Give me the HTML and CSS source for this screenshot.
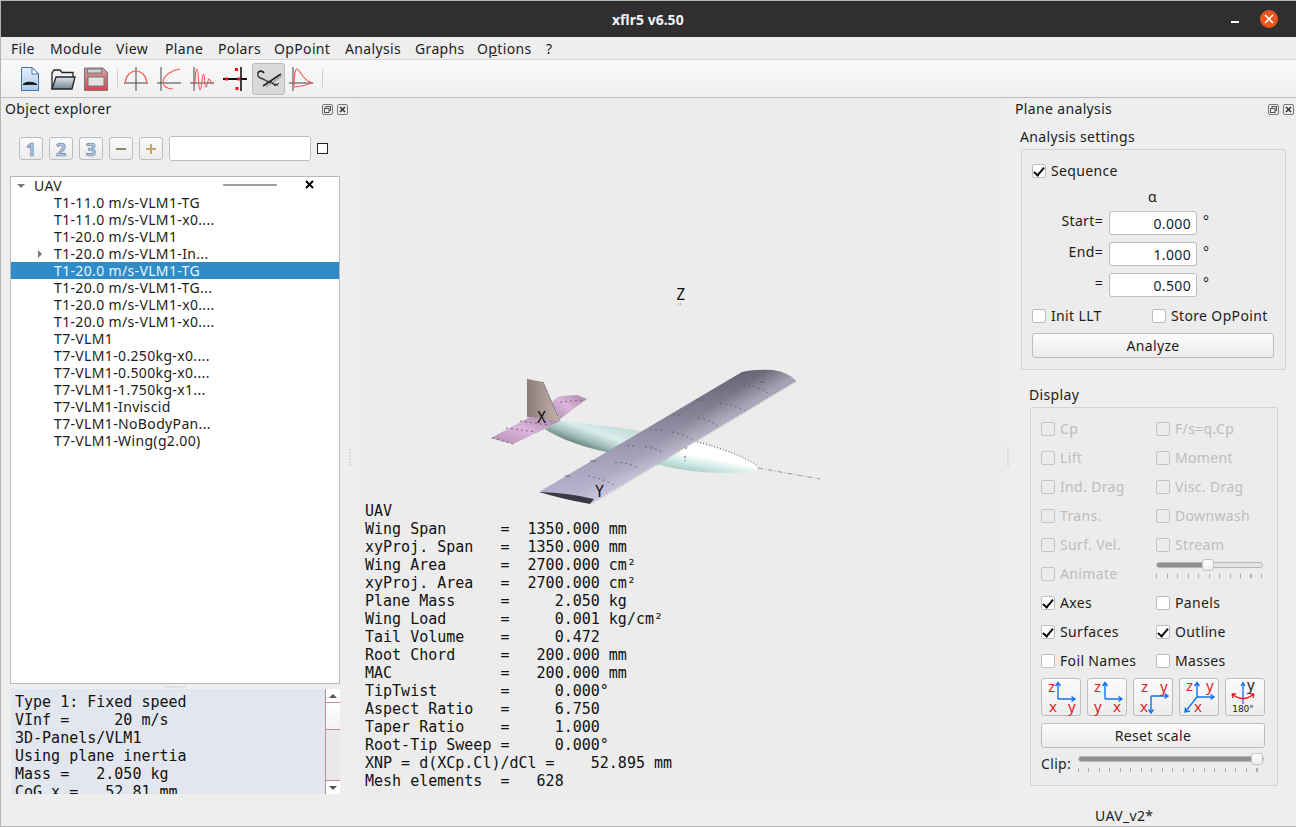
FILE: index.html
```html
<!DOCTYPE html>
<html lang="en">
<head>
    <meta charset="UTF-8">
    <title>xflr5 v6.50</title>
    <link rel="stylesheet" href="styles.css">
</head>
<body>
<div class="window">
    <div class="titlebar">
        <span class="title">xflr5 v6.50</span>
        <span class="minimize"></span>
        <span class="close">
            <svg width="10" height="10" viewBox="0 0 10 10"><path d="M1 1L9 9M9 1L1 9" stroke="#fff" stroke-width="1.6"/></svg>
        </span>
    </div>

    <div class="menubar">
        <span>File</span><span>Module</span><span>View</span><span>Plane</span><span>Polars</span><span>OpPoint</span><span>Analysis</span><span>Graphs</span><span>O<u>p</u>tions</span><span>?</span>
    </div>

    <div class="toolbar">
        <span class="grip"></span>
        <span class="tool doc">
            <svg width="24" height="26" viewBox="0 0 24 26">
                <defs><linearGradient id="docfill" x1="0" y1="0" x2="0" y2="1"><stop offset="0" stop-color="#e4eef8"/><stop offset="1" stop-color="#a9cbea"/></linearGradient></defs>
                <path d="M3.5 1.5H14L20.5 8V24.5H3.5Z" fill="url(#docfill)" stroke="#3f75ab"/>
                <path d="M14 1.5V8H20.5Z" fill="#fff" stroke="#3f75ab"/>
                <path d="M5 18.5C8 15.5 15 15.5 19 18.5C14 18 9 18.5 5 18.5Z" fill="#111" stroke="#111"/>
            </svg>
        </span>
        <span class="tool">
            <svg width="26" height="26" viewBox="0 0 26 26">
                <defs><linearGradient id="folderfill" x1="0" y1="0" x2="0" y2="1"><stop offset="0" stop-color="#dfe5ea"/><stop offset="1" stop-color="#6f8598"/></linearGradient></defs>
                <path d="M2 23V7L4 4H10L12 6.500H23V11" fill="#f3f3f3" stroke="#222" stroke-width="1.300"/>
                <path d="M2 23L6 11H25L22 23Z" fill="url(#folderfill)" stroke="#222" stroke-width="1.300"/>
            </svg>
        </span>
        <span class="tool">
            <svg width="26" height="26" viewBox="0 0 26 26">
                <defs><linearGradient id="savefill" x1="0" y1="0" x2="0" y2="1"><stop offset="0" stop-color="#c9a4a6"/><stop offset="1" stop-color="#d9434f"/></linearGradient></defs>
                <path d="M1.500 2H20L24.500 6.500V24.500H1.500Z" fill="url(#savefill)" stroke="#777"/>
                <rect x="4.500" y="3" width="14" height="4" fill="#d9cfcf" stroke="#777"/>
                <rect x="5" y="11" width="16" height="9" fill="#e6e1e1" stroke="#777"/>
            </svg>
        </span>
        <span class="tool-sep first"></span>
        <span class="tool">
            <svg width="26" height="26" viewBox="0 0 26 26">
                <path d="M1 17H25M13 1V25" stroke="#444" stroke-width="1" fill="none"/>
                <path d="M2 17C3 9 8 5 13 5C18 5 23 9 24 17" stroke="#f25a5a" stroke-width="1.100" fill="none"/>
            </svg>
        </span>
        <span class="tool">
            <svg width="26" height="26" viewBox="0 0 26 26">
                <path d="M1 17H25M5 1V25" stroke="#444" stroke-width="1" fill="none"/>
                <path d="M24 3C16 4 8 9 7 16C7 20 11 23 17 23" stroke="#f25a5a" stroke-width="1.100" fill="none"/>
            </svg>
        </span>
        <span class="tool">
            <svg width="26" height="26" viewBox="0 0 26 26">
                <path d="M1 17H25M5 1V25" stroke="#444" stroke-width="1" fill="none"/>
                <path d="M6 18C6 10 7 3 8 3C10 3 9 24 11 24C13 24 13 8 14.500 8C16 8 15 21 17 21C18.500 21 18.500 13 20 13C21.500 13 21 18 25 17" stroke="#f25a5a" stroke-width="1.100" fill="none"/>
            </svg>
        </span>
        <span class="tool">
            <svg width="26" height="26" viewBox="0 0 26 26">
                <path d="M1 13H25" stroke="#111" stroke-width="2"/>
                <path d="M19 1V25" stroke="#111" stroke-width="1.600"/>
                <path d="M13 2h3v3h-3zM3 11.500h3v3h-3zM15.500 11.500h3v3h-3zM13.500 21h3v3h-3z" fill="#f01414"/>
            </svg>
        </span>
        <span class="tool active">
            <svg width="28" height="24" viewBox="0 0 28 24">
                <path d="M3 6C2 10 5 11 8 12C12 14 16 17 23 18" stroke="#444" stroke-width="1.500" fill="none"/>
                <path d="M3 6C4 3 8 4 9 6" stroke="#222" stroke-width="1.800" fill="none"/>
                <path d="M8 19L26 7" stroke="#222" stroke-width="1.600"/>
                <path d="M11 20L27 9" stroke="#888" stroke-width="1"/>
                <path d="M15 13L20 19L24 16" stroke="#333" stroke-width="1" fill="none"/>
            </svg>
        </span>
        <span class="tool">
            <svg width="26" height="26" viewBox="0 0 26 26">
                <path d="M1 17H25M5 1V25" stroke="#444" stroke-width="1" fill="none"/>
                <path d="M6 21C6 12 7 3 9 3C12 3 13 13 24 17C18 19 10 21 6 21Z" stroke="#f25a5a" stroke-width="1.100" fill="none"/>
            </svg>
        </span>
        <span class="tool-sep last"></span>
    </div>

    <div class="main">
        <div class="dock dock-left">
            <div class="dock-title">
                <span>Object explorer</span>
                <span class="dock-btns">
                    <svg class="dock-btn" width="11" height="11" viewBox="0 0 11 11"><rect x=".5" y=".5" width="10" height="10" rx="1.500" fill="none" stroke="#777"/><rect x="4" y="2.500" width="4.500" height="4" fill="none" stroke="#555"/><rect x="2.500" y="4.500" width="4.500" height="4" fill="#eee" stroke="#555"/></svg>
                    <svg class="dock-btn" width="11" height="11" viewBox="0 0 11 11"><rect x=".5" y=".5" width="10" height="10" rx="1.500" fill="none" stroke="#777"/><path d="M3 3L8 8M8 3L3 8" stroke="#333" stroke-width="1.600"/></svg>
                </span>
            </div>

            <div class="level-row">
                <span class="level-btn num">1</span>
                <span class="level-btn num">2</span>
                <span class="level-btn num">3</span>
                <span class="level-btn sign"><svg width="14" height="14" viewBox="0 0 14 14"><path d="M2 7H12" stroke="#8a8a68" stroke-width="2"/></svg></span>
                <span class="level-btn sign"><svg width="14" height="14" viewBox="0 0 14 14"><path d="M2 7H12M7 2V12" stroke="#c9a36a" stroke-width="2"/></svg></span>
                <span class="filter-input"></span>
                <span class="plain-box"></span>
            </div>

            <div class="tree">
                <div class="tree-row top">
                    <span class="arrow-down"></span>
                    <span class="top-name">UAV</span>
                    <span class="top-line"></span>
                    <svg class="top-x" width="9" height="9" viewBox="0 0 9 9"><path d="M1 1L8 8M8 1L1 8" stroke="#000" stroke-width="2"/></svg>
                </div>
                <div class="tree-row">T1-11.0 m/s-VLM1-TG</div>
                <div class="tree-row">T1-11.0 m/s-VLM1-x0....</div>
                <div class="tree-row">T1-20.0 m/s-VLM1</div>
                <div class="tree-row"><span class="arrow-right"></span>T1-20.0 m/s-VLM1-In...</div>
                <div class="tree-row selected">T1-20.0 m/s-VLM1-TG</div>
                <div class="tree-row">T1-20.0 m/s-VLM1-TG...</div>
                <div class="tree-row">T1-20.0 m/s-VLM1-x0....</div>
                <div class="tree-row">T1-20.0 m/s-VLM1-x0....</div>
                <div class="tree-row">T7-VLM1</div>
                <div class="tree-row">T7-VLM1-0.250kg-x0....</div>
                <div class="tree-row">T7-VLM1-0.500kg-x0....</div>
                <div class="tree-row">T7-VLM1-1.750kg-x1...</div>
                <div class="tree-row">T7-VLM1-Inviscid</div>
                <div class="tree-row">T7-VLM1-NoBodyPan...</div>
                <div class="tree-row">T7-VLM1-Wing(g2.00)</div>
            </div>

            <div class="hsplit"></div>

            <div class="polar-box">
                <pre class="polar-text">Type 1: Fixed speed
VInf =     20 m/s
3D-Panels/VLM1
Using plane inertia
Mass =   2.050 kg
CoG x =   52.81 mm</pre>
                <div class="scrollbar">
                    <span class="scroll-end"><span class="tri-up"></span></span>
                    <span class="scroll-gap"></span>
                    <span class="scroll-thumb"></span>
                    <span class="scroll-end low"><span class="tri-down"></span></span>
                </div>
            </div>
        </div>

        <div class="vsplit wide"></div>

        <div class="canvas">
            <svg class="plane" width="650" height="707" viewBox="355 98 650 707">
                <defs>
                    <linearGradient id="wingSpan" gradientUnits="userSpaceOnUse" x1="770" y1="370" x2="560" y2="495">
                        <stop offset="0" stop-color="#5d596a"/>
                        <stop offset=".35" stop-color="#7f7b90"/>
                        <stop offset=".65" stop-color="#a09cb5"/>
                        <stop offset="1" stop-color="#bdb9d6"/>
                    </linearGradient>
                    <linearGradient id="wingChord" gradientUnits="userSpaceOnUse" x1="640" y1="425" x2="665" y2="462">
                        <stop offset="0" stop-color="#000" stop-opacity=".06"/>
                        <stop offset=".55" stop-color="#fff" stop-opacity=".08"/>
                        <stop offset="1" stop-color="#efe9ff" stop-opacity=".5"/>
                    </linearGradient>
                    <linearGradient id="fuse" gradientUnits="userSpaceOnUse" x1="600" y1="420" x2="588" y2="452">
                        <stop offset="0" stop-color="#c8dedb"/>
                        <stop offset=".35" stop-color="#d8eeea"/>
                        <stop offset=".65" stop-color="#a3bdb9"/>
                        <stop offset="1" stop-color="#4a6460"/>
                    </linearGradient>
                    <linearGradient id="nose" gradientUnits="userSpaceOnUse" x1="700" y1="440" x2="693" y2="476">
                        <stop offset="0" stop-color="#fff"/>
                        <stop offset=".4" stop-color="#fff"/>
                        <stop offset=".65" stop-color="#cdeae4"/>
                        <stop offset=".9" stop-color="#a8c8c2"/>
                        <stop offset="1" stop-color="#5f7a76"/>
                    </linearGradient>
                    <linearGradient id="fin" x1="0" y1="0" x2="1" y2="0">
                        <stop offset="0" stop-color="#8a7c7a"/>
                        <stop offset="1" stop-color="#c8b2aa"/>
                    </linearGradient>
                    <linearGradient id="stab" x1="0" y1="1" x2="1" y2="0">
                        <stop offset="0" stop-color="#b08cb0"/>
                        <stop offset=".5" stop-color="#dcb6dc"/>
                        <stop offset="1" stop-color="#a584a5"/>
                    </linearGradient>
                </defs>

                <path d="M758 467L820 478" stroke="#999" stroke-width="1" stroke-dasharray="5 2 1 2" fill="none"/>
                <path d="M552 402Q556 395 562 395L577 394L587 398L560 418Z" fill="url(#stab)"/>
                <path d="M527 378L543 381L560 420L527 416Z" fill="url(#fin)"/>
                <path d="M491 437L530 416L560 420L545 428L513 443Z" fill="url(#stab)"/>
                <path d="M492 437L513 443M506 427L536 431M520 420L548 424M560 401L585 399" stroke="#555" stroke-width=".8" stroke-dasharray="2 3" fill="none"/>
                <path d="M543 381L560 420" stroke="#444" stroke-width="1" stroke-dasharray="1 1" fill="none"/>

                <path d="M545 428L560 420C600 424 625 427 645 431L660 463C640 458 610 452 590 447C575 443 555 435 545 428Z" fill="url(#fuse)"/>
                <path d="M690 439C725 448 752 458 757 465Q759 470 752 471C720 473 690 472 656 463Z" fill="url(#nose)"/>
                <path d="M694 440C725 448 750 458 757 465" stroke="#444" stroke-width="1" stroke-dasharray="1 2" fill="none"/>
                <path d="M686 442V450M685 455V460" stroke="#555" stroke-width="1" stroke-dasharray="2 2" fill="none"/>

                <path d="M539 491L742 371Q755 368 773 369Q790 372 796 380L592 502Q565 497 539 491Z" fill="url(#wingSpan)"/>
                <path d="M539 491L742 371Q755 368 773 369Q790 372 796 380L592 502Q565 497 539 491Z" fill="url(#wingChord)"/>
                <path d="M539 491Q570 492 594 498L590 503Q562 498 539 491Z" fill="#3b3a44"/>
                <path d="M796 381L592 503" stroke="#999" stroke-width=".8" stroke-dasharray="1 2" fill="none"/>
                <g stroke="#55546a" stroke-width=".8" fill="none">
                    <path d="M743 384Q758 385 768 392" stroke-dasharray="2 3"/>
                    <path d="M697 399H707M720 402Q735 404 745 410" stroke-dasharray="2 3"/>
                    <path d="M673 414H683M698 417Q710 419 718 425" stroke-dasharray="2 3"/>
                    <path d="M650 429H662M672 431Q684 433 692 439" stroke-dasharray="2 3"/>
                    <path d="M627 445H635M645 446Q656 447 663 452" stroke-dasharray="2 3"/>
                    <path d="M615 461Q630 462 638 467" stroke-dasharray="2 3"/>
                    <path d="M588 475Q605 478 615 485" stroke-dasharray="2 3"/>
                    <path d="M590 460H596M565 475H570M760 381H765"/>
                </g>

                <text class="axis-label" x="537" y="422">X</text>
                <text class="axis-label" x="595" y="496">Y</text>
                <text class="axis-label" x="676" y="299">Z</text>
                <path d="M678 303H682" stroke="#777" stroke-dasharray="1 1"/>
            </svg>
            <pre class="plane-data">UAV
Wing Span      =  1350.000 mm
xyProj. Span   =  1350.000 mm
Wing Area      =  2700.000 cm&#178;
xyProj. Area   =  2700.000 cm&#178;
Plane Mass     =     2.050 kg
Wing Load      =     0.001 kg/cm&#178;
Tail Volume    =     0.472
Root Chord     =   200.000 mm
MAC            =   200.000 mm
TipTwist       =     0.000&#176;
Aspect Ratio   =     6.750
Taper Ratio    =     1.000
Root-Tip Sweep =     0.000&#176;
XNP = d(XCp.Cl)/dCl =    52.895 mm
Mesh elements  =   628</pre>
        </div>

        <div class="vsplit"></div>

        <div class="dock dock-right">
            <div class="dock-title">
                <span>Plane analysis</span>
                <span class="dock-btns">
                    <svg class="dock-btn" width="11" height="11" viewBox="0 0 11 11"><rect x=".5" y=".5" width="10" height="10" rx="1.500" fill="none" stroke="#777"/><rect x="4" y="2.500" width="4.500" height="4" fill="none" stroke="#555"/><rect x="2.500" y="4.500" width="4.500" height="4" fill="#eee" stroke="#555"/></svg>
                    <svg class="dock-btn" width="11" height="11" viewBox="0 0 11 11"><rect x=".5" y=".5" width="10" height="10" rx="1.500" fill="none" stroke="#777"/><path d="M3 3L8 8M8 3L3 8" stroke="#333" stroke-width="1.600"/></svg>
                </span>
            </div>

            <div class="group-label settings-label">Analysis settings</div>
            <div class="group settings">
                <label class="check"><span class="box on"></span>Sequence</label>
                <div class="alpha">&#593;</div>
                <div class="field"><span class="field-name">Start=</span><span class="num-input">0.000</span><span class="deg">&#176;</span></div>
                <div class="field"><span class="field-name">End=</span><span class="num-input">1.000</span><span class="deg">&#176;</span></div>
                <div class="field"><span class="field-name">=</span><span class="num-input">0.500</span><span class="deg">&#176;</span></div>
                <div class="two-col init-row">
                    <label class="check"><span class="box"></span>Init LLT</label>
                    <label class="check"><span class="box"></span>Store OpPoint</label>
                </div>
                <div class="push-btn analyze">Analyze</div>
            </div>

            <div class="group-label display-label">Display</div>
            <div class="group display">
                <div class="check-grid">
                    <label class="check off"><span class="box"></span>Cp</label>
                    <label class="check off"><span class="box"></span>F/s=q.Cp</label>
                    <label class="check off"><span class="box"></span>Lift</label>
                    <label class="check off"><span class="box"></span>Moment</label>
                    <label class="check off"><span class="box"></span>Ind. Drag</label>
                    <label class="check off"><span class="box"></span>Visc. Drag</label>
                    <label class="check off"><span class="box"></span>Trans.</label>
                    <label class="check off"><span class="box"></span>Downwash</label>
                    <label class="check off"><span class="box"></span>Surf. Vel.</label>
                    <label class="check off"><span class="box"></span>Stream</label>
                    <label class="check off"><span class="box"></span>Animate</label>
                    <div class="slider anim-slider">
                        <div class="track"><span class="track-fill" style="width:44%"></span><span class="handle"></span><span class="track-rest"></span></div>
                        <div class="ticks"></div>
                    </div>
                    <label class="check"><span class="box on"></span>Axes</label>
                    <label class="check"><span class="box"></span>Panels</label>
                    <label class="check"><span class="box on"></span>Surfaces</label>
                    <label class="check"><span class="box on"></span>Outline</label>
                    <label class="check"><span class="box"></span>Foil Names</label>
                    <label class="check"><span class="box"></span>Masses</label>
                </div>

                <div class="view-btns">
                    <span class="view-btn">
                        <svg width="38" height="36" viewBox="0 0 38 36">
                            <path d="M16 20V4M13.500 7L16 3.500L18.500 7M16 20H33M29.500 17.500L33 20L29.500 22.500" stroke="#1273f0" stroke-width="1.400" fill="none"/>
                            <text class="ax red" x="6" y="13">z</text><text class="ax red" x="7" y="33">x</text><text class="ax red" x="26" y="33">y</text>
                        </svg>
                    </span>
                    <span class="view-btn">
                        <svg width="38" height="36" viewBox="0 0 38 36">
                            <path d="M17 20V4M14.500 7L17 3.500L19.500 7M17 20H34M30.500 17.500L34 20L30.500 22.500" stroke="#1273f0" stroke-width="1.400" fill="none"/>
                            <text class="ax red" x="6" y="13">z</text><text class="ax red" x="6" y="33">y</text><text class="ax red" x="25" y="33">x</text>
                        </svg>
                    </span>
                    <span class="view-btn">
                        <svg width="38" height="36" viewBox="0 0 38 36">
                            <path d="M17 17H34M30.500 14.500L34 17L30.500 19.500M17 17V34M14.500 30.500L17 34L19.500 30.500" stroke="#1273f0" stroke-width="1.400" fill="none"/>
                            <text class="ax red" x="7" y="13">z</text><text class="ax red" x="26" y="13">y</text><text class="ax red" x="6" y="33">x</text>
                        </svg>
                    </span>
                    <span class="view-btn">
                        <svg width="38" height="36" viewBox="0 0 38 36">
                            <path d="M17 18V4M14.500 7L17 3.500L19.500 7M17 18H34M30.500 15.500L34 18L30.500 20.500M17 18L5 33M5.500 28.500L5 33L10 32" stroke="#1273f0" stroke-width="1.400" fill="none"/>
                            <text class="ax red" x="6" y="12">z</text><text class="ax red" x="26" y="12">y</text><text class="ax red" x="14" y="33">x</text>
                        </svg>
                    </span>
                    <span class="view-btn">
                        <svg width="38" height="36" viewBox="0 0 38 36">
                            <path d="M17 4V25M15 7L17 3.500L19 7" stroke="#1273f0" stroke-width="1.300" fill="none"/>
                            <path d="M6 15Q17 24 28 15M6 15L7 19M6 15L10 15M28 15L27 19M28 15L24 15" stroke="#ee1c1c" stroke-width="1.300" fill="none"/>
                            <text class="ax dark" x="21" y="11">y</text>
                            <text class="deg-label" x="17" y="33">180&#176;</text>
                        </svg>
                    </span>
                </div>

                <div class="push-btn reset">Reset scale</div>

                <div class="clip-row">
                    <span class="clip-label">Clip:</span>
                    <div class="slider clip-slider">
                        <div class="track"><span class="track-fill" style="width:100%"></span><span class="handle"></span></div>
                        <div class="ticks"></div>
                    </div>
                </div>
            </div>

            <div class="file-name">UAV_v2*</div>
        </div>
    </div>
</div>
</body>
</html>
```

FILE: styles.css
```css
* {
    box-sizing: border-box;
}

body {
    margin: 0;
    background-color: #eeeeee;
    font-family: "Noto Sans", sans-serif;
    font-size: 14px;
    letter-spacing: .35px;
    color: #1c1c1c;
}

.window {
    width: 1296px;
    height: 827px;
    overflow: hidden;
    display: flex;
    flex-direction: column;
    border-top: 1px solid #b5b5b5;
    border-left: 1px solid #b5b5b5;
    border-bottom: 1px solid #b5b5b5;
}

/* title bar */
.titlebar {
    height: 36px;
    flex: none;
    background-color: #302e2e;
    display: flex;
    align-items: center;
    justify-content: flex-end;
    position: relative;
    padding-right: 18px;
}

.title {
    position: absolute;
    left: 611px;
    top: 9px;
    color: #f2f2f2;
    font-weight: bold;
    font-size: 14px;
    letter-spacing: 0;
    line-height: 19px;
}

.minimize {
    width: 8px;
    height: 2px;
    background: #fff;
    margin-right: 21px;
    margin-top: 6px;
}

.close {
    width: 18px;
    height: 18px;
    border-radius: 50%;
    background-color: #e9541f;
    display: flex;
    align-items: center;
    justify-content: center;
}

/* menu */
.menubar {
    height: 23px;
    flex: none;
    display: grid;
    grid-template-columns: 39px 66px 49px 53px 56px 71px 70px 62px 69px 20px;
    padding-left: 10px;
    padding-top: 1px;
    align-items: center;
    line-height: 20px;
    border-bottom: 1px solid #d6d6d6;
    background-color: #eeeeee;
}

/* toolbar */
.toolbar {
    height: 38px;
    flex: none;
    display: flex;
    align-items: center;
    padding-left: 6px;
    background: linear-gradient(#f9f9f9, #efefef);
    border-bottom: 1px solid #bcbcbc;
}

.grip {
    width: 4px;
    height: 18px;
    margin-right: 6px;
    background-image: radial-gradient(#b5b5b5 40%, transparent 45%);
    background-size: 2px 2px;
}

.tool {
    width: 33px;
    height: 30px;
    display: flex;
    align-items: center;
    justify-content: center;
}

.tool.doc {
    width: 26px;
    margin-right: 3px;
}

.tool.active {
    height: 32px;
    margin-left: 1px;
    margin-right: -1px;
    background-color: #d9d9d9;
    border: 1px solid #bcbcbc;
    border-radius: 3px;
}

.tool-sep {
    width: 1px;
    height: 20px;
    background-color: #d0d0d0;
}

.tool-sep.first {
    margin: 0 1px 0 5px;
}

.tool-sep.last {
    margin-left: 5px;
}

/* main row */
.main {
    flex: 1;
    min-height: 0;
    display: flex;
}

.dock {
    flex: none;
    display: flex;
    flex-direction: column;
}

.dock-left {
    width: 344px;
    padding: 0 4px 0 4px;
}

.dock-right {
    width: 285px;
    padding-left: 4px;
}

.dock-title {
    height: 22px;
    display: flex;
    align-items: center;
    justify-content: space-between;
    line-height: 20px;
}

.dock-btns {
    display: flex;
    gap: 4px;
}

.dock-left .dock-btns {
    margin-right: -7px;
}

.dock-right .dock-btns {
    margin-right: 2px;
}

.level-row {
    margin: 16px 0 0 14px;
    height: 25px;
    display: flex;
    align-items: center;
    gap: 6px;
}

.level-btn {
    width: 24px;
    height: 23px;
    border: 1px solid #bdbdbd;
    border-radius: 3px;
    background: linear-gradient(#fbfbfb, #ececec);
    display: flex;
    align-items: center;
    justify-content: center;
}

.level-btn.num {
    font-size: 18px;
    font-weight: bold;
    color: #b4c6e0;
    -webkit-text-stroke: .6px #5f7fa8;
    font-family: "Noto Sans", sans-serif;
}

.filter-input {
    width: 142px;
    height: 25px;
    background-color: #fff;
    border: 1px solid #bdbdbd;
    border-radius: 3px;
}

.plain-box {
    width: 11px;
    height: 11px;
    border: 1px solid #222;
    background-color: #fff;
}

.tree {
    margin: 15px 0 0 5px;
    width: 330px;
    height: 508px;
    background-color: #fff;
    border: 1px solid #b8b8b8;
    flex: none;
}

.tree-row {
    height: 17px;
    line-height: 17px;
    padding-left: 43px;
    white-space: nowrap;
    display: flex;
    align-items: center;
}

.tree-row.top {
    padding-left: 0;
}

.tree-row.selected {
    background-color: #308cc6;
    color: #eaf3f9;
}

.arrow-down {
    width: 0;
    height: 0;
    border-left: 4px solid transparent;
    border-right: 4px solid transparent;
    border-top: 4px solid #777;
    margin: 0 9px 0 6px;
}

.top-name {
    width: 189px;
}

.top-line {
    width: 54px;
    height: 2px;
    background-color: #a0a0a6;
    margin-top: -1px;
}

.top-x {
    margin-left: 28px;
    margin-top: -3px;
}

.arrow-right {
    width: 0;
    height: 0;
    border-top: 4px solid transparent;
    border-bottom: 4px solid transparent;
    border-left: 4px solid #777;
    margin-left: -16px;
    margin-right: 12px;
}

.hsplit {
    height: 5px;
    margin-left: 5px;
    width: 330px;
    background: radial-gradient(#c4c4c4 40%, transparent 45%) center/3px 2px repeat-x;
    -webkit-mask: linear-gradient(90deg, transparent 47%, #000 47%, #000 53%, transparent 53%);
    mask: linear-gradient(90deg, transparent 47%, #000 47%, #000 53%, transparent 53%);
}

.polar-box {
    margin-left: 6px;
    width: 329px;
    height: 105px;
    display: flex;
    overflow: hidden;
    background-color: #e2e6ee;
}

.polar-text {
    margin: 4px 0 0 4px;
    flex: 1;
    font-family: "DejaVu Sans Mono", monospace;
    font-size: 15px;
    letter-spacing: 0;
    line-height: 18px;
    color: #111;
}

.scrollbar {
    width: 15px;
    flex: none;
    display: flex;
    flex-direction: column;
    background-color: #fff;
    border-left: 1px solid #b98f8f;
}

.scroll-end {
    height: 14px;
    flex: none;
    display: flex;
    align-items: center;
    justify-content: center;
    border-bottom: 1px solid #b98f8f;
}

.scroll-end.low {
    border-bottom: 0;
    border-top: 1px solid #b98f8f;
}

.scroll-gap {
    height: 27px;
    flex: none;
    border-bottom: 1px solid #b98f8f;
    background: linear-gradient(#fff, #f2f2f2);
}

.scroll-thumb {
    flex: 1;
    background-color: #e9e9e9;
}

.tri-up {
    border-left: 4px solid transparent;
    border-right: 4px solid transparent;
    border-bottom: 4px solid #555;
}

.tri-down {
    border-left: 4px solid transparent;
    border-right: 4px solid transparent;
    border-top: 4px solid #555;
}

.vsplit {
    width: 6px;
    flex: none;
    background: radial-gradient(#c4c4c4 40%, transparent 45%) center/2px 3px repeat-y;
    -webkit-mask: linear-gradient(transparent 48%, #000 48%, #000 50.500%, transparent 50.500%);
    mask: linear-gradient(transparent 48%, #000 48%, #000 50.500%, transparent 50.500%);
}

.vsplit.wide {
    width: 10px;
}

/* 3d view */
.canvas {
    width: 650px;
    flex: none;
    position: relative;
    display: flex;
    flex-direction: column;
    justify-content: flex-end;
    background-color: #ececec;
    margin-bottom: 21px;
    margin-top: 1px;
}

.plane {
    position: absolute;
    left: 0;
    top: 0;
}

.axis-label {
    font-family: "DejaVu Sans Mono", monospace;
    font-size: 15px;
    letter-spacing: 0;
    fill: #111;
}

.plane-data {
    margin: 0 0 15px 10px;
    font-family: "DejaVu Sans Mono", monospace;
    font-size: 15px;
    letter-spacing: 0;
    line-height: 18px;
    color: #111;
}

/* right panel */
.group-label {
    line-height: 20px;
}

.settings-label {
    margin: 7px 0 0 5px;
}

.group {
    border: 1px solid #d4d4d4;
    border-radius: 2px;
    background-color: #ececec;
}

.settings {
    width: 265px;
    height: 221px;
    margin: 2px 0 0 6px;
    padding: 11px 10px 0 10px;
}

.check {
    display: flex;
    align-items: center;
    gap: 5px;
    line-height: 20px;
    white-space: nowrap;
}

.check.off {
    color: #bdbdbd;
}

.box {
    width: 14px;
    height: 14px;
    flex: none;
    border: 1px solid #bdbdbd;
    border-radius: 2px;
    background-color: #fff;
    display: flex;
    align-items: center;
    justify-content: center;
}

.check.off .box {
    background-color: transparent;
    border-color: #c4c4c4;
}

.box.on::after {
    content: "";
    width: 4px;
    height: 9px;
    margin-top: -2px;
    border-right: 2px solid #111;
    border-bottom: 2px solid #111;
    transform: rotate(40deg);
}

.alpha {
    text-align: center;
    margin: 7px 0 0 0;
    line-height: 18px;
    padding-right: 2px;
}

.field {
    display: flex;
    align-items: center;
    height: 24px;
    margin-bottom: 7px;
}

.alpha + .field {
    margin-top: 5px;
}

.field-name {
    width: 71px;
    text-align: right;
    margin-top: -6px;
    margin-right: 6px;
}

.num-input {
    width: 88px;
    height: 24px;
    background-color: #fff;
    border: 1px solid #bdbdbd;
    border-radius: 3px;
    text-align: right;
    padding-right: 5px;
    line-height: 24px;
}

.deg {
    margin-left: 6px;
    margin-top: -5px;
}

.two-col {
    display: grid;
    grid-template-columns: 120px 1fr;
}

.init-row {
    margin-top: 9px;
}

.push-btn {
    height: 25px;
    border: 1px solid #bdbdbd;
    border-radius: 3px;
    background: linear-gradient(#fcfcfc, #ececec);
    text-align: center;
    line-height: 23px;
}

.analyze {
    margin-top: 7px;
    width: 242px;
}

.display-label {
    margin: 15px 0 0 14px;
}

.display {
    width: 248px;
    height: 379px;
    margin: 2px 0 0 15px;
    padding: 11px 0 0 10px;
}

.check-grid {
    display: grid;
    grid-template-columns: 115px 1fr;
    grid-auto-rows: 29px;
    align-items: start;
    line-height: 20px;
}

.slider {
    width: 107px;
}

.track {
    height: 6px;
    display: flex;
    align-items: center;
    background-color: #e4e4e4;
    border: 1px solid #b8b8b8;
    border-radius: 3px;
}

.track-fill {
    height: 4px;
    background-color: #8f8f8f;
    border-radius: 2px;
}

.handle {
    width: 12px;
    height: 12px;
    flex: none;
    background: linear-gradient(#fff, #ededed);
    border: 1px solid #c2c2c2;
    border-radius: 3px;
    margin-left: -1px;
}

.ticks {
    height: 4px;
    margin-top: 6px;
    background-image: repeating-linear-gradient(90deg, #aaa 0, #aaa 1px, transparent 1px, transparent 10.500px);
}

.anim-slider {
    margin-top: -2px;
}

.view-btns {
    display: flex;
    gap: 6px;
    margin-top: -2px;
}

.view-btn {
    width: 40px;
    height: 38px;
    border: 1px solid #bdbdbd;
    border-radius: 3px;
    background: linear-gradient(#fbfbfb, #ececec);
    display: flex;
}

.view-btn svg {
    overflow: visible;
}

.ax {
    font-family: "Noto Sans", sans-serif;
    font-size: 15px;
}

.ax.red {
    fill: #d8252a;
}

.ax.dark {
    fill: #222;
}

.deg-label {
    font-family: "DejaVu Sans", sans-serif;
    font-size: 9px;
    letter-spacing: 0;
    fill: #222;
    text-anchor: middle;
}

.reset {
    width: 224px;
    margin-top: 7px;
}

.clip-row {
    display: flex;
    margin-top: 7px;
    align-items: flex-start;
}

.clip-label {
    width: 37px;
    line-height: 20px;
    margin-top: -1px;
}

.clip-slider {
    width: 186px;
    margin-top: 1px;
}

.file-name {
    margin: 20px 0 0 80px;
    line-height: 20px;
}
```
